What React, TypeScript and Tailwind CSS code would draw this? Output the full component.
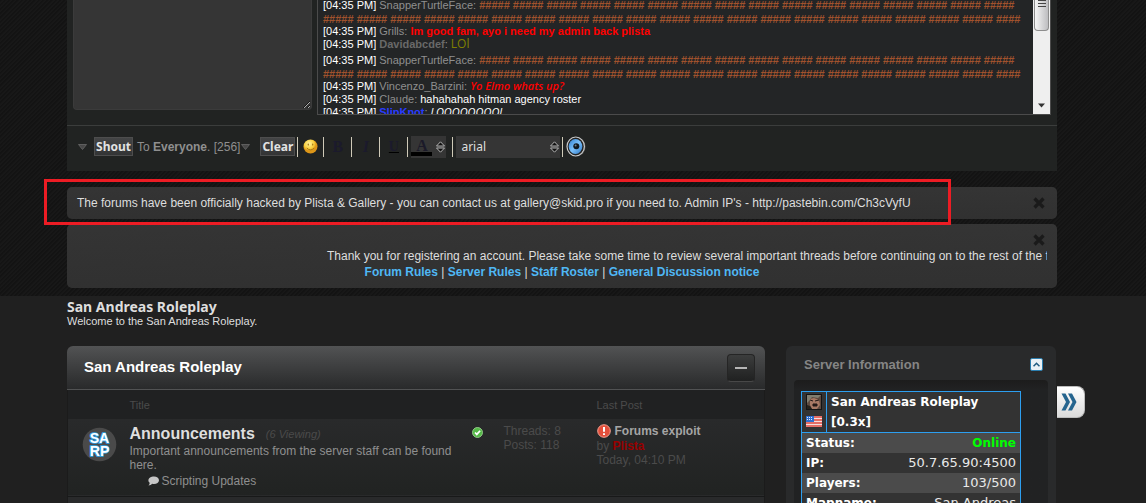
import type { ReactNode } from "react";

type Shout = { id: number; user: string; text: string; userClass: string; textClass: string; row: string };

const masked = "#####";
const spam = `${Array(16).fill(masked).join(" ")}\n${Array(20).fill(masked).join(" ")} ####`;
const spamClass = "text-[#a0522d] font-bold";

const shouts: Shout[] = [
  { id: 1, user: "SnapperTurtleFace", text: spam, userClass: "text-[#8f8f8f]", textClass: spamClass, row: "h-[29px] leading-[14px] pt-[2px]" },
  { id: 2, user: "Grills", text: "Im good fam, ayo i need my admin back plista", userClass: "text-[#8f8f8f]", textClass: "font-bold text-[#ff0000]", row: "h-[13px] leading-[13px]" },
  { id: 3, user: "Davidabcdef", text: "LOl", userClass: "font-bold text-[#696969]", textClass: "text-xs leading-none text-[#808000] font-['Open_Sans',sans-serif]", row: "h-[13px] leading-[13px]" },
  { id: 4, user: "SnapperTurtleFace", text: spam, userClass: "text-[#8f8f8f]", textClass: spamClass, row: "h-[29px] leading-[14px] pt-[2px]" },
  { id: 5, user: "Vincenzo_Barzini", text: "Yo Elmo whats up?", userClass: "text-[#8f8f8f]", textClass: "italic leading-none font-semibold text-[#ff0000] font-['Open_Sans',sans-serif]", row: "h-[13px] leading-[13px]" },
  { id: 6, user: "Claude", text: "hahahahah hitman agency roster", userClass: "text-[#8f8f8f]", textClass: "text-white", row: "h-[13px] leading-[13px]" },
  { id: 7, user: "SlipKnot", text: "LOOOOOOOOL", userClass: "font-bold text-[#2a3cff]", textClass: "italic leading-none text-white font-['Open_Sans',sans-serif]", row: "h-[13px] leading-[13px]" },
];

const noticeLinks = ["Forum Rules", "Server Rules", "Staff Roster", "General Discussion notice"];

const serverRows = [
  { label: "Status:", value: "Online", valueClass: "text-xs font-bold text-[#00ff00]", row: "bg-[#4b4b4b]" },
  { label: "IP:", value: "50.7.65.90:4500", valueClass: "", row: "bg-[#333333]" },
  { label: "Players:", value: "103/500", valueClass: "", row: "bg-[#4b4b4b]" },
  { label: "Mapname:", value: "San Andreas", valueClass: "", row: "bg-[#333333]" },
];

function Caret() {
  return (
    <svg className="h-[6px] w-[9px] shrink-0" viewBox="0 0 9 6" aria-hidden="true">
      <path d="M0.5 0.5h8L4.5 5.5z" fill="#484848" stroke="#5e5e5e" strokeWidth="1" />
    </svg>
  );
}

function Separator() {
  return <span className="h-5 w-px shrink-0 bg-[#cfcab8]" />;
}

function UpDown({ className }: { className: string }) {
  return (
    <svg className={`h-3 w-[9px] ${className}`} viewBox="0 0 9 12" aria-hidden="true">
      <path d="M0.5 5L4.5 0.8 8.5 5zM0.5 7L4.5 11.2 8.5 7z" fill="#111" stroke="#b5b5b5" strokeWidth="1" />
    </svg>
  );
}

function Smiley() {
  return (
    <svg className="size-[15px]" viewBox="0 0 15 15" aria-hidden="true">
      <defs>
        <radialGradient id="smile" cx="40%" cy="30%">
          <stop offset="0" stopColor="#fff3a0" />
          <stop offset="0.7" stopColor="#f8ce3c" />
          <stop offset="1" stopColor="#dd9618" />
        </radialGradient>
      </defs>
      <circle cx="7.5" cy="7.5" r="7" fill="url(#smile)" />
      <ellipse cx="5.3" cy="5.6" rx="0.7" ry="1.1" fill="#a87a18" />
      <ellipse cx="9.7" cy="5.6" rx="0.7" ry="1.1" fill="#a87a18" />
      <path d="M3.8 9q3.7 3.8 7.4 0" fill="none" stroke="#a87a18" strokeWidth="1" />
    </svg>
  );
}

function Speaker() {
  return (
    <svg className="h-[21px] w-5" viewBox="0 0 20 21" aria-hidden="true">
      <defs>
        <linearGradient id="cone" x1="0" y1="0" x2="1" y2="1">
          <stop offset="0" stopColor="#2f7fd0" />
          <stop offset="0.5" stopColor="#7cc0fa" />
          <stop offset="1" stopColor="#2a76c4" />
        </linearGradient>
      </defs>
      <ellipse cx="11.5" cy="10.8" rx="8" ry="9.2" fill="#555" />
      <ellipse cx="9.7" cy="10.5" rx="8.7" ry="9.5" fill="#222" stroke="#c9c9c9" strokeWidth="1.2" />
      <ellipse cx="9.5" cy="10.5" rx="6.8" ry="7.6" fill="url(#cone)" />
      <circle cx="10.3" cy="10.3" r="3" fill="#101820" />
      <circle cx="9.6" cy="9.6" r="1" fill="#6c7e8c" />
    </svg>
  );
}

function CloseButton() {
  return (
    <button type="button" aria-label="Dismiss" className="block size-3">
      <svg viewBox="0 0 12 12" className="size-3" aria-hidden="true">
        <path d="M1.5 1.5l9 9M10.5 1.5l-9 9" stroke="#1a1a1a" strokeWidth="3.2" />
      </svg>
    </button>
  );
}

function ShoutBox() {
  return (
    <section className="bg-[#212322]">
      <div className="flex h-[125px] items-start gap-[5px] pr-[6px] pl-[6px]">
        <textarea aria-label="Shout message" className="h-[110px] w-[239px] shrink-0 rounded-b border border-t-0 border-[#3b3b3b] bg-[#353535] text-white" />
        <div className="flex h-[115px] min-w-0 flex-1 overflow-hidden border border-t-0 border-[#4b4b4b] bg-[#232526]">
          <div className="-mt-1 min-w-0 flex-1 overflow-hidden pl-[5px] text-[11px] text-[#8f8f8f]">
            {shouts.map((shout) => (
              <div key={shout.id} className={`whitespace-pre ${shout.row}`}>
                <span className="text-white">[04:35 PM]</span> <span className={shout.userClass}>{shout.user}</span>: <span className={shout.textClass}>{shout.text}</span>
              </div>
            ))}
          </div>
          <div className="flex w-[17px] flex-col justify-between bg-[#efefef]">
            <div className="mx-px flex h-[31px] flex-col items-center gap-px rounded-b-sm border border-t-0 border-[#8d8d8d] bg-linear-to-r from-[#f6f6f6] to-[#bdbdc0]">
              <span className="h-px w-2 bg-[#444]" />
              <span className="mt-px h-px w-2 bg-[#444]" />
              <span className="mt-px h-px w-2 bg-[#444]" />
            </div>
            <svg className="mx-auto mb-[6px] h-[5px] w-[7px]" viewBox="0 0 7 5" aria-hidden="true">
              <path d="M0 0.5h7L3.5 4.5z" fill="#333" />
            </svg>
          </div>
        </div>
      </div>
      <div className="flex h-[46px] items-center border-t border-[#3b3d3c] px-[11px] pb-1 text-xs text-[#8f8f8f]">
        <Caret />
        <button type="button" className="ml-[7px] h-[19px] w-[39px] border border-[#4d4d4d] bg-linear-to-b from-[#434445] to-[#333435] font-['Noto_Sans',sans-serif] leading-[17px] font-bold text-[#e2e2e2]">Shout</button>
        <span className="mr-px ml-1 whitespace-pre">To <b>Everyone</b>. [256]</span>
        <Caret />
        <button type="button" className="mr-[2px] ml-[10px] h-[19px] w-[35px] border border-[#4d4d4d] bg-linear-to-b from-[#434445] to-[#333435] font-['Noto_Sans',sans-serif] leading-[17px] font-bold text-[#e2e2e2]">Clear</button>
        <Separator />
        <button type="button" aria-label="Smilies" className="flex w-[25px] justify-center"><Smiley /></button>
        <Separator />
        <button type="button" className="w-[27px] font-['Liberation_Serif',serif] text-base font-bold text-[#1b1a2c]">B</button>
        <Separator />
        <button type="button" className="w-[27px] font-['Liberation_Serif',serif] text-base font-bold text-[#1b1a2c] italic">I</button>
        <Separator />
        <button type="button" className="w-[27px] font-['Liberation_Serif',serif] text-sm font-bold text-[#1b1a2c] underline decoration-black">U</button>
        <Separator />
        <button type="button" aria-label="Text colour" className="mr-[6px] ml-[3px] flex h-[22px] w-[35px] items-center bg-[#353535]">
          <span className="h-[18px] w-[21px] border-b-4 border-black text-center font-['Liberation_Serif',serif] text-base leading-[15px] font-bold text-[#1b1a29]">A</span>
          <UpDown className="ml-1" />
        </button>
        <Separator />
        <div className="relative mr-[2px] ml-[3px]">
          <select aria-label="Font" className="block h-[22px] w-[104px] appearance-none bg-[#353535] px-[5px] font-['Noto_Sans',sans-serif] text-xs text-[#dedede]">
            <option>arial</option>
          </select>
          <UpDown className="pointer-events-none absolute top-[5px] right-px" />
        </div>
        <Separator />
        <button type="button" aria-label="Sound" className="ml-[3px]"><Speaker /></button>
      </div>
    </section>
  );
}

function ForumTable() {
  return (
    <section className="min-w-0 flex-1">
      <header className="flex h-[44px] items-center justify-between rounded-t-md border-b border-[#515253] bg-linear-to-b from-[#525354] to-[#292a2b] pr-[10px] pl-[17px]">
        <h2 className="text-[15px] font-bold text-white">San Andreas Roleplay</h2>
        <button type="button" aria-label="Collapse" className="flex size-7 items-center justify-center rounded border border-[#252525] border-b-[#484848] bg-linear-to-b from-[#3c3d3d] to-[#202121]">
          <span className="h-[2px] w-3 bg-[#b5b5b5]" />
        </button>
      </header>
      <table className="w-full table-fixed border-x border-[#1b1b1b] bg-[#202122] text-left text-xs leading-[14px]">
        <colgroup>
          <col className="w-[62px]" />
          <col />
          <col className="w-[93px]" />
          <col className="w-[168px]" />
        </colgroup>
        <thead>
          <tr className="h-[29px] text-[11px] text-[#4b4b4b]">
            <th />
            <th className="font-normal">Title</th>
            <th />
            <th className="font-normal">Last Post</th>
          </tr>
        </thead>
        <tbody>
          <tr className="h-[77px] border-b border-[#181919] bg-linear-to-b from-[#292a2b] to-[#212322] align-top text-[#4b4b4b]">
            <td className="pt-2 pl-[14px]">
              <svg className="size-[35px]" viewBox="0 0 35 35" role="img" aria-label="SARP">
                <circle cx="17.5" cy="17.5" r="16.8" fill="#4a4a4a" />
                <g fill="#fff" stroke="#2ea3e6" strokeWidth="1.6" paintOrder="stroke" fontFamily="Liberation Sans, sans-serif" fontSize="14" fontWeight="bold" textAnchor="middle">
                  <text x="17.5" y="15.5">SA</text>
                  <text x="17.5" y="28.5">RP</text>
                </g>
              </svg>
            </td>
            <td className="pt-[5px]">
              <div className="flex justify-between pr-[21px]">
                <div className="w-[337px]">
                  <h3 className="flex items-center leading-[20px]">
                    <a href="#announcements" className="text-base leading-[20px] font-bold text-[#dedede]">Announcements</a>
                    <span className="ml-[11px] text-[11px] italic">(6 Viewing)</span>
                  </h3>
                  <p className="text-[#8f8f8f]">Important announcements from the server staff can be found here.</p>
                  <a href="#scripting-updates" className="ml-[18px] flex items-center gap-[3px] pt-[2px] text-[#8f8f8f]">
                    <svg className="h-[10px] w-[11px]" viewBox="0 0 11 10" aria-hidden="true">
                      <path d="M6 0.5C8.8 0.5 11 2 11 4.2S8.8 8 6 8c-.7 0-1.3-.1-1.9-.2C3.2 8.9 2 9.5.5 9.5 1.3 8.7 1.7 7.8 1.7 6.8.8 6.1.4 5.2.4 4.2.4 2 3.2.5 6 .5z" fill="#c6c6c6" />
                    </svg>
                    Scripting Updates
                  </a>
                </div>
                <svg className="mt-[3px] size-[11px] shrink-0" viewBox="0 0 11 11" aria-hidden="true">
                  <circle cx="5.5" cy="5.5" r="5" fill="#54b947" stroke="#a4dd9a" strokeWidth="0.8" />
                  <path d="M3 5.5l1.8 1.9 3.3-3.7" fill="none" stroke="#fff" strokeWidth="1.7" />
                </svg>
              </div>
            </td>
            <td className="pt-[5px]">Threads: 8<br />Posts: 118</td>
            <td className="pt-[5px]">
              <div className="flex items-center gap-1">
                <svg className="size-[14px]" viewBox="0 0 14 14" aria-hidden="true">
                  <circle cx="7" cy="7" r="6.3" fill="#e4503c" stroke="#f3a092" strokeWidth="1" />
                  <path d="M7 3v4.8M7 9.2v1.8" stroke="#fff" strokeWidth="2" />
                </svg>
                <a href="#forums-exploit" className="font-bold text-[#a5a5a5]">Forums exploit</a>
              </div>
              <div className="pt-px">by <a href="#plista" className="font-bold text-[#990000]">Plista</a></div>
              <div>Today, 04:10 PM</div>
            </td>
          </tr>
          <tr className="h-10 bg-[#292a2b]">
            <td colSpan={4} />
          </tr>
        </tbody>
      </table>
    </section>
  );
}

function ServerInfo() {
  return (
    <aside className="relative w-[270px] shrink-0 rounded-t-md bg-[#292a2b] px-2 pt-1">
      <header className="mb-px flex h-[29px] items-center justify-between pr-[5px] pl-[10px]">
        <h2 className="text-[13px] font-bold text-[#858585]">Server Information</h2>
        <button type="button" aria-label="Collapse" className="flex size-[13px] items-center justify-center rounded-xs border border-[#2b7eaf] bg-[#eaf1f5]">
          <svg className="h-[5px] w-[7px]" viewBox="0 0 7 5" aria-hidden="true">
            <path d="M0.5 4.3l3-3 3 3" fill="none" stroke="#205b80" strokeWidth="1.6" />
          </svg>
        </button>
      </header>
      <div className="h-[170px] rounded-t bg-linear-to-b from-[#1c1c1c] to-[#212223] to-[10px] pt-[11px] pl-[7px]">
        <div className="w-[220px] border border-[#2d9ff0]">
          <table className="w-full border-separate border-spacing-0 font-['DejaVu_Sans',sans-serif] text-[13px] leading-5 text-[#e9e9e9]">
            <tbody>
              <tr className="bg-[#333333] align-top">
                <td className="w-[25px] border-r border-b border-[#2d9ff0] pt-[2px] pl-1">
                  <svg className="size-4" viewBox="0 0 16 16" aria-hidden="true">
                    <path d="M0 0h16v16H0z" fill="#141414" />
                    <path d="M1 1h14v14H1z" fill="#5d4a3f" />
                    <path d="M1 1h14L12 4 6 3 3 7 1 9z" fill="#817e70" />
                    <path d="M4 5l4-1 5 2 1 5-3 4H6l-2-4z" fill="#a77965" />
                    <path d="M4 6l3 1M9 7l4-1M7 10h4v2H7z" fill="#2b1d19" stroke="#211917" />
                    <path d="M1 11l3 1 2 3H1z" fill="#242019" />
                  </svg>
                  <svg className="mt-[6px] h-[11px] w-4" viewBox="0 0 16 11" aria-hidden="true">
                    <path d="M0 0h16v11H0z" fill="#f5dedd" />
                    <path d="M0 1h16M0 4h16M0 7h16M0 10h16" stroke="#e0483e" strokeWidth="1.5" />
                    <path d="M0 0h8v6H0z" fill="#2f6fd0" />
                    <path d="M1 1.5h6M1 3.5h6" stroke="#dce8fb" strokeDasharray="1 1" />
                  </svg>
                </td>
                <th colSpan={2} className="border-b border-[#2d9ff0] pl-1 text-left text-xs leading-5 font-bold text-white">San Andreas Roleplay<br />[0.3x]</th>
              </tr>
              {serverRows.map((row) => (
                <tr key={row.label} className={`h-5 ${row.row}`}>
                  <th colSpan={2} className="pl-1 text-left text-xs leading-5 font-bold text-white">{row.label}</th>
                  <td className={`pr-1 text-right leading-5 ${row.valueClass}`}>{row.value}</td>
                </tr>
              ))}
            </tbody>
          </table>
        </div>
      </div>
      <button type="button" aria-label="Hide sidebar" className="absolute top-10 left-full ml-px flex h-8 w-7 items-center rounded-r-lg border border-l-0 border-[#bcbcbc] bg-linear-to-b from-white to-[#dadada] pl-1">
        <svg className="h-[18px] w-4" viewBox="0 0 16 18" aria-hidden="true">
          <path d="M0.5 0.5h4L9 9l-4.5 8.500h-4L5 9zM7 0.5h4L15.5 9 11 17.500H7L11.500 9z" fill="#25648e" />
        </svg>
      </button>
    </aside>
  );
}

function Notice({ className, children }: { className: string; children: ReactNode }) {
  return <div className={`relative rounded-[5px] bg-linear-to-b from-[#363636]/95 to-[#323232]/95 text-xs text-[#dedede] ${className}`}>{children}</div>;
}

export default function App() {
  return (
    <div className="h-screen overflow-hidden bg-[#202020] font-['Liberation_Sans',Arial,sans-serif]">
      <div className="bg-[repeating-linear-gradient(135deg,#131313_0px,#131313_1px,#181818_2px,#181818_3px)] pr-[89px] pb-2 pl-[67px]">
        <ShoutBox />
        <Notice className="mt-4 flex h-8 items-center justify-between pr-3 pl-[10px]">
          <p>The forums have been officially hacked by Plista &amp; Gallery - you can contact us at gallery@skid.pro if you need to. Admin IP's - http://pastebin.com/Ch3cVyfU</p>
          <CloseButton />
          <div className="pointer-events-none absolute -top-2 right-[106px] -bottom-[6px] -left-[23px] z-10 border-3 border-[#ed1c24]" />
        </Notice>
        <Notice className="mt-[5px] flex h-16 flex-col px-[10px] pt-[10px] leading-4">
          <div className="flex h-[14px] justify-end pr-[2px]"><CloseButton /></div>
          <p className="overflow-hidden pl-[250px] whitespace-nowrap">Thank you for registering an account. Please take some time to review several important threads before continuing on to the rest of the forum.</p>
          <p className="text-center">
            {noticeLinks.map((label, i) => (
              <span key={label}>
                {i > 0 && " | "}
                <a href={`#notice-${i}`} className="font-bold text-[#4fb8f5]">{label}</a>
              </span>
            ))}
          </p>
        </Notice>
      </div>
      <main className="pt-[3px] pr-[90px] pl-[67px] text-[#dedede]">
        <h1 className="font-['Noto_Sans',sans-serif] text-sm leading-4 font-bold">San Andreas Roleplay</h1>
        <p className="text-[11px] leading-[13px]">Welcome to the San Andreas Roleplay.</p>
        <div className="mt-[18px] flex items-start gap-[21px]">
          <ForumTable />
          <ServerInfo />
        </div>
      </main>
    </div>
  );
}
